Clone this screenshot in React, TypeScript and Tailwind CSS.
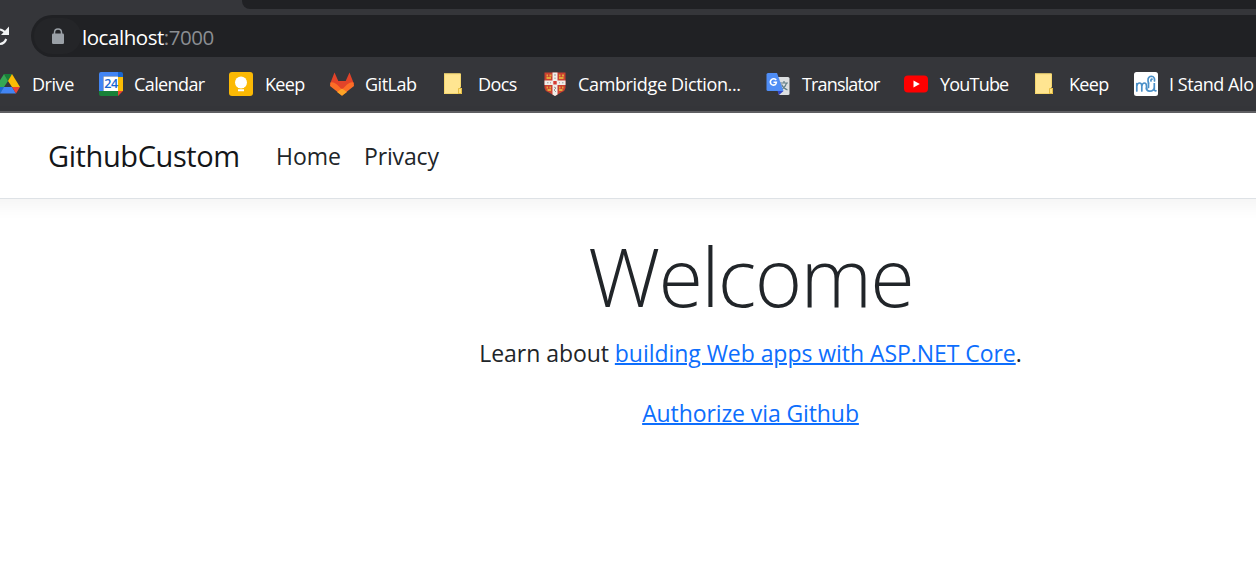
import type { ReactNode } from 'react';

const Drive = () => (
  <svg width="24" height="24" viewBox="0 0 24 24">
    <path d="M8 2H16L12 9Z" fill="#188038" />
    <path d="M8 2L12 9L4 21L0 14.5Z" fill="#34a853" />
    <path d="M16 2L24 15H16L12 9Z" fill="#fbbc04" />
    <path d="M0 15H8L4 21.5Z" fill="#1967d2" />
    <path d="M8 15H16L20 21.5H4Z" fill="#4285f4" />
    <path d="M16 15H24L20 21.5Z" fill="#ea4335" />
  </svg>
);

const Calendar = () => (
  <svg width="24" height="24" viewBox="0 0 24 24">
    <path d="M2 0H19V4.500H4.500V19H0V2Q0 0 2 0Z" fill="#4285f4" />
    <path d="M19 0H22Q24 0 24 2V5H19Z" fill="#1967d2" />
    <path d="M19 5H24V19H19Z" fill="#fbbc04" />
    <path d="M0 19H5V24H2Q0 24 0 22Z" fill="#188038" />
    <path d="M5 19H19V24H5Z" fill="#188038" />
    <path d="M19 19H24L19 24Z" fill="#ea4335" />
    <path d="M4.500 4.500H19V19H4.500Z" fill="#fff" />
    <text x="12" y="16.400" textAnchor="middle" fontSize="12.500" fontWeight="600" letterSpacing="-0.4" fill="#1967d2" className="font-['Open_Sans',sans-serif]">24</text>
  </svg>
);

const Keep = () => (
  <svg width="24" height="24" viewBox="0 0 24 24">
    <rect width="24" height="24" rx="3" fill="#fbb904" />
    <circle cx="12" cy="10.500" r="6" fill="#fff" />
    <path d="M9 13H15V16H9ZM9 17.200H15V19.200H9Z" fill="#fff" />
  </svg>
);

const GitLab = () => (
  <svg width="24" height="24" viewBox="0 0 24 24">
    <path d="M4.500 0.500L8.300 9H15.700L19.500 0.500L24 12L12 23.500L0 12Z" fill="#e24329" />
    <path d="M0.500 10.500Q3 9.500 7 12.500L12 17.500L17 12.500Q21 9.500 23.500 10.500L24 14L12 23.500L0 14Z" fill="#fc6d26" />
    <path d="M12 16.500L17 20L12 23.800L7 20Z" fill="#fca326" />
  </svg>
);

const Folder = () => (
  <svg width="24" height="24" viewBox="0 0 24 24">
    <path d="M2 1.500H18.500V16H20V22H2Z" fill="#ffe591" />
    <path d="M2.500 2V21.500H18.500M2 1.900H18.500V15" fill="none" stroke="#f4d66d" />
    <path d="M16.500 21V16.500H19.500V21.500H16" fill="#ffe37e" stroke="#e5bc42" />
  </svg>
);

const Shield = () => (
  <svg width="24" height="24" viewBox="0 0 24 24">
    <path d="M1.500 0.500H22.500V16Q22 19 19 20L12 24L5 20Q2 19 1.500 16Z" fill="#cb4030" />
    <path d="M9.500 0.500H14.500V8.500H22.500V13H14.500V22.500L12 24L9.500 22.500V13H1.500V8.500H9.500Z" fill="#f0eee9" />
    <path d="M10.300 9H13.700V12.500H10.300Z" fill="#d43b32" />
    <path d="M3.500 3.500H5M6.500 3.500H8.500M3.500 6H8M16 3.500H17.500M19 3.500H21M16 6H20.500M3.500 15.500H5M6.500 15.500H8M4.500 18H8M16 15.500H17.500M19 15.500H20.500M16 18H19.500" fill="none" stroke="#e0a83c" strokeWidth="1.800" />
    <path d="M4 10.800H5.500M7 10.800H8M16 10.800H17M19 10.800H20.500M12 2V4M12 5.500V7M11 15L13 16L11 18L13 20" fill="none" stroke="#999" />
  </svg>
);

const Translate = () => (
  <svg width="24" height="24" viewBox="0 0 24 24">
    <path d="M10 5H22Q23.500 5 23.500 6.500V22Q23.500 23 22 23H13Z" fill="#dcdfe1" />
    <path d="M14 11H22M18 9V11M20.500 11Q19 16 14.500 18M15.500 12.500Q17 16 21.500 18" fill="none" stroke="#607d86" strokeWidth="1.200" />
    <path d="M11.500 19H17.500L13 23Z" fill="#3446c6" />
    <path d="M2 1H11L17.500 19H2Q0.500 19 0.500 17.500V2.500Q0.500 1 2 1Z" fill="#4f8df5" />
    <path d="M10.300 8Q7.900 5.800 5.500 7.500Q3.400 9.500 5 12Q7 14 9.400 12.500Q10.300 11.600 10.400 10.200H7.500" fill="none" stroke="#fff" strokeWidth="1.500" />
  </svg>
);

const YouTube = () => (
  <svg width="24" height="24" viewBox="0 0 24 24">
    <rect y="3.500" width="24" height="17" rx="4" fill="#f00" />
    <path d="M9.500 8.500V15.500L15.800 12Z" fill="#fff" />
  </svg>
);

const MuseScore = () => (
  <svg width="24" height="24" viewBox="0 0 24 24">
    <rect width="24" height="24" rx="2.500" fill="#fff" />
    <g fill="none" stroke="#4a90c8" strokeWidth="1.700" strokeLinecap="round">
      <path d="M2.800 19V11.500M2.800 14Q3.500 11 5.500 11Q7.800 11 7.800 14V19M7.800 14Q8.500 11 10.300 11Q12.500 11 12.500 14V17" />
      <path d="M12.500 16Q12.500 19.200 15.500 19.200Q20.300 19.200 20.300 15V11V18Q20.800 19.200 22 18.800M14.500 11V15.500" />
      <path d="M14.500 11Q13 6 16 4.500Q19.800 3.500 20.500 7V9M18 7.200Q16.500 7.500 17 9" />
    </g>
  </svg>
);

const bookmarks: { label: string; icon: ReactNode; box: string; text: string }[] = [
  { label: 'Drive', icon: <Drive />, box: 'w-[103px]', text: 'ml-px tracking-[-0.45px]' },
  { label: 'Calendar', icon: <Calendar />, box: 'w-[130px]', text: 'tracking-[-0.6px]' },
  { label: 'Keep', icon: <Keep />, box: 'w-[101px]', text: 'ml-px tracking-[-0.7px]' },
  { label: 'GitLab', icon: <GitLab />, box: 'w-[112px]', text: 'tracking-[-0.5px]' },
  { label: 'Docs', icon: <Folder />, box: 'w-[101px]', text: 'ml-px tracking-[-0.6px]' },
  { label: 'Cambridge Diction...', icon: <Shield />, box: 'w-[223px]', text: 'tracking-[-0.35px]' },
  { label: 'Translator', icon: <Translate />, box: 'w-[138px]', text: 'ml-px tracking-[-0.85px]' },
  { label: 'YouTube', icon: <YouTube />, box: 'w-[129px]', text: 'ml-px tracking-[-0.8px]' },
  { label: 'Keep', icon: <Folder />, box: 'w-[101px]', text: 'ml-px tracking-[-0.7px]' },
  { label: 'I Stand Alo', icon: <MuseScore />, box: 'w-[126px]', text: 'tracking-[-0.45px]' },
];

function BrowserChrome() {
  return (
    <div className="flex h-[113px] flex-col border-b-2 border-[#606064] bg-[#35363a]">
      <div className="flex h-[9px] shrink-0 justify-end">
        <div className="w-[1014px] rounded-bl-lg bg-[#202124]" />
      </div>
      <div className="mt-[6px] flex h-[42px] shrink-0">
        <div className="flex w-[31px] shrink-0 items-center">
          <svg width="12" height="24" viewBox="0 0 12 24" fill="none">
            <path d="M0 5.500Q3.500 6 6.200 9.500M0 20Q4.500 19.500 6.200 15" stroke="#f1f3f4" strokeWidth="2.200" />
            <path d="M9 2.500V11H1Z" fill="#f1f3f4" />
          </svg>
        </div>
        <div className="flex flex-1 items-center rounded-l-full bg-[#202124]">
          <div className="ml-[3px] flex h-9 w-[47px] items-center rounded-full bg-[#242528] pl-[18px]">
            <svg width="12" height="16" viewBox="0 0 12 16">
              <path d="M2.500 7V4.500Q2.500 1 6 1Q9.500 1 9.500 4.500V7" fill="none" stroke="#9aa0a6" strokeWidth="1.500" />
              <rect y="5.500" width="12" height="10.500" rx="1.300" fill="#9aa0a6" />
            </svg>
          </div>
          <div className="pt-[2px] pl-px text-[20.5px] leading-none font-medium tracking-[-0.45px] text-white">
            localhost<span className="font-normal text-[#8b8e92]">:7000</span>
          </div>
        </div>
      </div>
      <div className="-ml-1 flex h-[54px] items-center overflow-hidden text-[18px] leading-none text-white">
        {bookmarks.map((b, i) => (
          <div key={i} className={`flex shrink-0 items-center gap-[11px] whitespace-nowrap ${b.box}`}>
            <span className="shrink-0">{b.icon}</span>
            <span className={b.text}>{b.label}</span>
          </div>
        ))}
      </div>
    </div>
  );
}

export default function App() {
  return (
    <div className="h-[573px] w-[1256px] overflow-hidden bg-white font-['Open_Sans','Noto_Sans',sans-serif] text-[#212529]">
      <BrowserChrome />
      <header className="-mx-8 flex h-[86px] items-center border-b border-[#dee2e6] bg-white pt-px pl-20 shadow-[0_6px_18px_rgba(0,0,0,0.05)]">
        <a className="w-[228px] text-[29px] tracking-[-0.4px] text-[#141619]">GithubCustom</a>
        <nav className="flex pt-px text-[23px]">
          <a className="w-[88px]">Home</a>
          <a className="tracking-[-0.15px]">Privacy</a>
        </nav>
      </header>
      <main className="flex w-[1501px] flex-col items-center whitespace-nowrap">
        <h1 className="mt-[28px] text-[81px] leading-[98px] font-light tracking-[-1.7px]">Welcome</h1>
        <p className="mt-[10px] text-[23px] leading-9 tracking-[-0.05px]">
          Learn about <a className="text-[#0d6efd] underline decoration-2">building Web apps with ASP.NET Core</a>.
        </p>
        <a className="mt-6 text-[23px] leading-9 tracking-[-0.1px] text-[#0d6efd] underline decoration-2">Authorize via Github</a>
      </main>
    </div>
  );
}
